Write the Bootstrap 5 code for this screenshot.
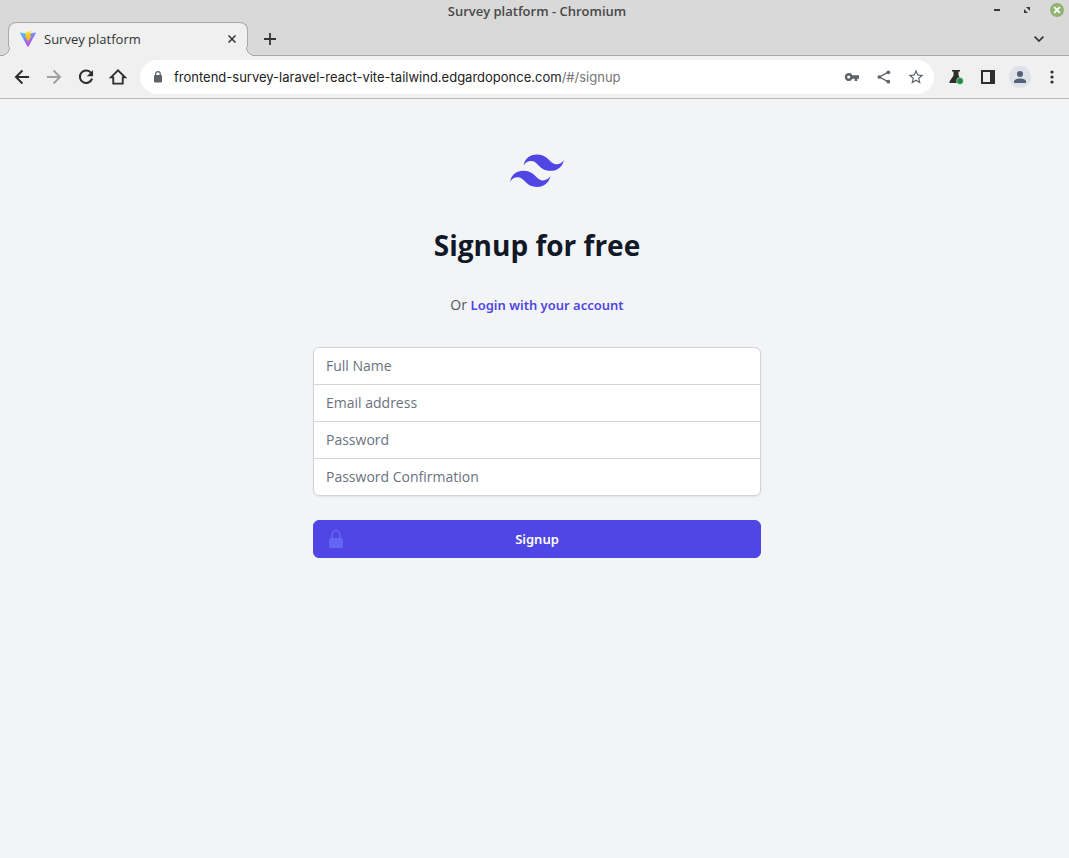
<!DOCTYPE html>
<html lang="en">
<head>
<meta charset="utf-8">
<meta name="viewport" content="width=device-width, initial-scale=1">
<title>Survey platform</title>
<link href="https://cdn.jsdelivr.net/npm/bootstrap@5.3.0/dist/css/bootstrap.min.css" rel="stylesheet">
<style>
  body { font: 400 14px/20px "Open Sans", "Noto Sans", sans-serif; background: #f3f4f6; color: #4b5563; }
  button { color: inherit; }
  svg { display: block; }

  /* Browser frame */
  .frame-top { background: #d9d9d9; color: #333; }
  .title-bar { height: 22px; padding-left: 5px; font-size: 13px; font-weight: 600; color: #484848; }
  .win-buttons { right: 0; top: -2px; gap: 6px; }
  .win-buttons button { width: 24px; height: 24px; }
  .tab-strip { height: 34px; gap: 6px; padding-left: 8px; padding-right: 14px; border-bottom: 1px solid #a9a9a9; }
  .page-tab { width: 240px; height: 34px; padding: 0 7px 0 11px; background: #f0f0f0; border: 1px solid #a9a9a9; border-bottom: 0; border-radius: 8px 8px 0 0; font-size: 13px; }
  .page-tab::before, .page-tab::after { content: ""; position: absolute; bottom: 0; width: 9px; height: 9px; background: radial-gradient(circle at 0 0, #d9d9d9 8px, #a9a9a9 8px, #a9a9a9 9px, #f0f0f0 9px); }
  .page-tab::before { right: 100%; margin-right: -1px; }
  .page-tab::after { left: 100%; margin-left: -1px; transform: scaleX(-1); }
  .tool-bar { height: 43px; padding-left: 6px; padding-right: 1px; background: #f0f0f0; border-bottom: 1px solid #b8b8b8; color: #2e2e2e; }
  .icon-btn { width: 32px; height: 32px; padding: 0; border: 0; background: none; display: flex; align-items: center; justify-content: center; flex: none; }
  .address { height: 34px; margin: 0 6px; padding: 0 2px 0 10px; background: #fff; border-radius: 17px; color: #5f6368; }
  .address-text { font-family: Inter, "Open Sans", sans-serif; font-size: 13px; color: #757575; margin-left: 8px; outline: 0; }
  .address-text span { color: #222; }
  .profile { width: 22px; height: 22px; background: #dee1e6; }

  /* Sign-up page */
  main { padding: 48px 0 48px 5px; }
  .signup-box { max-width: 448px; }
  .signup-box h1 { font-size: 28px; line-height: 36px; font-weight: 700; color: #111827; }
  .signup-box a, .btn-signup { font-family: "Noto Sans", "Open Sans", sans-serif; font-size: 13px; font-weight: 600; }
  .signup-box a { color: #4f46e5; }
  .field-stack { box-shadow: 0 1px 2px rgba(0, 0, 0, .08); border-radius: 6px; }
  .field-stack .form-control { height: 38px; padding: 7px 12px 9px; font-size: 14px; line-height: 20px; border-color: #d1d5db; border-radius: 0; }
  .field-stack .form-control::placeholder { color: #6b7280; }
  .field-stack .form-control + .form-control { margin-top: -1px; }
  .field-stack .form-control:first-child { border-radius: 6px 6px 0 0; }
  .field-stack .form-control:last-child { border-radius: 0 0 6px 6px; }
  .btn-signup { --bs-btn-color: #fff; --bs-btn-bg: #4f46e5; --bs-btn-border-color: #4f46e5; --bs-btn-hover-color: #fff; --bs-btn-hover-bg: #4338ca; --bs-btn-font-weight: 600; --bs-btn-font-size: 13px; --bs-btn-line-height: 20px; --bs-btn-padding-y: 8px; --bs-btn-border-radius: 6px; margin-top: 24px; }
  .btn-signup svg { position: absolute; left: 12px; top: 8px; color: #6366f1; }
</style>
</head>
<body>
<header>
  <div class="frame-top">
    <div class="title-bar position-relative d-flex align-items-center justify-content-center">
      <span>Survey platform - Chromium</span>
      <div class="win-buttons position-absolute d-flex">
        <button class="icon-btn" type="button" aria-label="Minimize"><svg width="8" height="8" viewBox="0 0 8 8"><path d="M1 3h6v2H1z" fill="#3a3a3a"/></svg></button>
        <button class="icon-btn" type="button" aria-label="Restore"><svg width="8" height="8" viewBox="0 0 8 8" fill="#3a3a3a"><path d="M3 1h4v4zM1 3v4h4z"/></svg></button>
        <button class="icon-btn" type="button" aria-label="Close window"><svg width="16" height="16" viewBox="0 0 16 16"><circle cx="8" cy="8" r="7" fill="#92b372"/><path d="M5.200 5.200l5.600 5.600m0-5.600l-5.600 5.600" stroke="#fff" stroke-width="1.900"/></svg></button>
      </div>
    </div>
    <div class="tab-strip d-flex align-items-center">
      <div class="page-tab position-relative d-flex align-items-center">
        <svg width="16" height="16" viewBox="0 0 32 32" aria-hidden="true">
          <defs>
            <linearGradient id="vg" x1="0" y1="0" x2=".6" y2="1"><stop stop-color="#41d1ff"/><stop offset="1" stop-color="#bd34fe"/></linearGradient>
            <linearGradient id="vy" x1="0" y1="0" x2="0" y2="1"><stop stop-color="#ffea4a"/><stop offset=".3" stop-color="#ffcf1f"/><stop offset="1" stop-color="#ffa800"/></linearGradient>
          </defs>
          <path fill="url(#vg)" d="M31.5 4.7 16.9 30.8a1 1 0 0 1-1.8 0L.2 4.7a1 1 0 0 1 1.1-1.5l14.6 2.6 14.5-2.6a1 1 0 0 1 1.1 1.5z"/>
          <path fill="url(#vy)" d="M22.6.1 11.8 2.2a.5.5 0 0 0-.4.4l-.7 11.3 3.5-.2-.8 5 2.6-.6-1.2 7.6 8-16-3.500.4L23 .6z"/>
        </svg>
        <span class="ms-2">Survey platform</span>
        <button class="icon-btn ms-auto w-auto px-1" type="button" aria-label="Close tab"><svg width="8" height="8" viewBox="0 0 8 8"><path d="M.5.5l7 7m0-7l-7 7" stroke="#333" stroke-width="1.500"/></svg></button>
      </div>
      <button class="icon-btn" type="button" aria-label="New tab"><svg width="12" height="12" viewBox="0 0 12 12"><path d="M6 0v12M0 6h12" stroke="#333" stroke-width="1.800"/></svg></button>
      <button class="icon-btn ms-auto" type="button" aria-label="Search tabs"><svg width="10" height="6" viewBox="0 0 10 6"><path d="M.6.6L5 5 9.400.6" fill="none" stroke="#333" stroke-width="1.700"/></svg></button>
    </div>
  </div>
  <nav class="tool-bar d-flex align-items-center" aria-label="Browser toolbar">
    <button class="icon-btn" type="button" aria-label="Back"><svg width="20" height="20" viewBox="0 0 24 24"><path d="M20.500 12H5M12.500 4.200L4.700 12l7.800 7.800" fill="none" stroke="currentColor" stroke-width="2.300"/></svg></button>
    <button class="icon-btn" type="button" aria-label="Forward"><svg width="20" height="20" viewBox="0 0 24 24"><path d="M3.500 12H19M11.500 4.200l7.800 7.800-7.800 7.800" fill="none" stroke="#a0a0a0" stroke-width="2.300"/></svg></button>
    <button class="icon-btn" type="button" aria-label="Reload"><svg width="20" height="20" viewBox="0 0 24 24"><path d="M18.200 7.200A7.500 7.500 0 1 0 19.300 14" fill="none" stroke="currentColor" stroke-width="2.400"/><path d="M20.500 3.500v7.500H13z" fill="currentColor"/></svg></button>
    <button class="icon-btn" type="button" aria-label="Home"><svg width="20" height="20" viewBox="0 0 24 24"><path d="M3.500 12.500L12 4l8.500 8.500h-2.800V20H6.300v-7.500z" fill="none" stroke="currentColor" stroke-width="2.200"/></svg></button>
    <div class="address d-flex align-items-center flex-grow-1">
      <svg width="16" height="16" viewBox="0 0 16 16" aria-hidden="true"><rect x="4" y="6" width="8" height="7.500" rx="1" fill="#5f6368"/><path d="M5.700 6.500V5a2.300 2.300 0 0 1 4.600 0v1.500" fill="none" stroke="#5f6368" stroke-width="1.200"/></svg>
      <div class="address-text flex-grow-1 text-nowrap" role="textbox" contenteditable="true" spellcheck="false" aria-label="Address"><span>frontend-survey-laravel-react-vite-tailwind.edgardoponce.com</span>/#/signup</div>
      <button class="icon-btn" type="button" aria-label="Saved passwords"><svg width="16" height="16" viewBox="0 0 24 24"><path fill="currentColor" fill-rule="evenodd" d="M12.600 9.500a6 6 0 1 0 0 5H16V18h4v-3.500h2.500v-5zM7 14.300a2.300 2.300 0 1 1 0-4.600 2.300 2.300 0 0 1 0 4.600z"/></svg></button>
      <button class="icon-btn" type="button" aria-label="Share"><svg width="16" height="16" viewBox="0 0 24 24" fill="currentColor"><path d="M18 5L5 12l13 7" fill="none" stroke="currentColor" stroke-width="2"/><circle cx="18.500" cy="5" r="2.800"/><circle cx="5" cy="12" r="2.800"/><circle cx="18.500" cy="19" r="2.800"/></svg></button>
      <button class="icon-btn" type="button" aria-label="Bookmark"><svg width="18" height="18" viewBox="0 0 24 24"><path fill="currentColor" d="M22 9.240l-7.190-.62L12 2 9.190 8.630 2 9.240l5.460 4.730L5.820 21 12 17.270 18.180 21l-1.630-7.030zM12 15.400l-3.760 2.270 1-4.280-3.320-2.880 4.380-.38L12 6.100l1.710 4.040 4.380.38-3.320 2.880 1 4.280z"/></svg></button>
    </div>
    <button class="icon-btn" type="button" aria-label="Experiments"><svg width="16" height="16" viewBox="0 0 16 16"><path d="M4 1h8v1.500h-1.500V6L14 14H1.500V12.500L5.500 6.500v-4H4z" fill="currentColor"/><circle cx="12" cy="12" r="3.400" fill="#1e8e3e" stroke="#f0f0f0" stroke-width=".6"/></svg></button>
    <button class="icon-btn" type="button" aria-label="Side panel"><svg width="14" height="14" viewBox="0 0 14 14"><path fill="currentColor" fill-rule="evenodd" d="M0 0h14v14H0zM2 2v10h7V2z"/></svg></button>
    <button class="icon-btn" type="button" aria-label="Profile"><span class="profile rounded-circle d-flex align-items-center justify-content-center"><svg width="12" height="12" viewBox="0 0 12 12" fill="#53607a"><circle cx="6" cy="3" r="3"/><path d="M0 12v-1.500C0 8.500 3 7.500 6 7.500s6 1 6 3V12z"/></svg></span></button>
    <button class="icon-btn" type="button" aria-label="Menu"><svg width="4" height="14" viewBox="0 0 4 14" fill="currentColor"><circle cx="2" cy="2" r="1.600"/><circle cx="2" cy="7" r="1.600"/><circle cx="2" cy="12" r="1.600"/></svg></button>
  </nav>
</header>
<main>
  <div class="signup-box mx-auto text-center">
    <svg class="mx-auto" width="54" height="48" viewBox="0 0 54 48" role="img" aria-label="Logo"><path fill="#4f46e5" fill-rule="evenodd" d="M27 7.500c-7.200 0-11.700 3.600-13.500 10.800 2.700-3.600 5.850-4.950 9.450-4.050 2.054.513 3.522 2.004 5.147 3.653C30.744 20.590 33.808 23.700 40.500 23.700c7.200 0 11.700-3.600 13.500-10.800-2.700 3.600-5.850 4.950-9.450 4.050-2.054-.513-3.522-2.004-5.147-3.653C36.756 10.610 33.692 7.500 27 7.500zM13.500 23.700C6.300 23.700 1.800 27.300 0 34.500c2.700-3.600 5.850-4.950 9.450-4.050 2.054.514 3.522 2.004 5.147 3.653C17.244 36.790 20.308 39.900 27 39.900c7.200 0 11.700-3.600 13.500-10.800-2.700 3.600-5.850 4.950-9.450 4.050-2.054-.513-3.522-2.004-5.147-3.653C23.256 26.810 20.192 23.700 13.500 23.700z"/></svg>
    <h1 class="mt-4 pt-2">Signup for free</h1>
    <p class="mt-4 pt-2 mb-4">Or <a href="#/login" class="text-decoration-none">Login with your account</a></p>
    <form class="mt-4 pt-2">
      <div class="field-stack">
        <input class="form-control" type="text" aria-label="Full Name" placeholder="Full Name">
        <input class="form-control" type="email" aria-label="Email address" placeholder="Email address">
        <input class="form-control" type="password" aria-label="Password" placeholder="Password">
        <input class="form-control" type="password" aria-label="Password Confirmation" placeholder="Password Confirmation">
      </div>
      <button class="btn btn-signup w-100 position-relative" type="submit">
        <svg width="20" height="20" viewBox="0 0 20 20" fill="currentColor" aria-hidden="true"><path fill-rule="evenodd" d="M10 1a4.500 4.500 0 0 0-4.500 4.500V9H5a2 2 0 0 0-2 2v6a2 2 0 0 0 2 2h10a2 2 0 0 0 2-2v-6a2 2 0 0 0-2-2h-.5V5.500A4.500 4.500 0 0 0 10 1zm3 8V5.500a3 3 0 1 0-6 0V9h6z"/></svg>
        Signup
      </button>
    </form>
  </div>
</main>
<script src="https://cdn.jsdelivr.net/npm/bootstrap@5.3.0/dist/js/bootstrap.bundle.min.js"></script>
</body>
</html>
